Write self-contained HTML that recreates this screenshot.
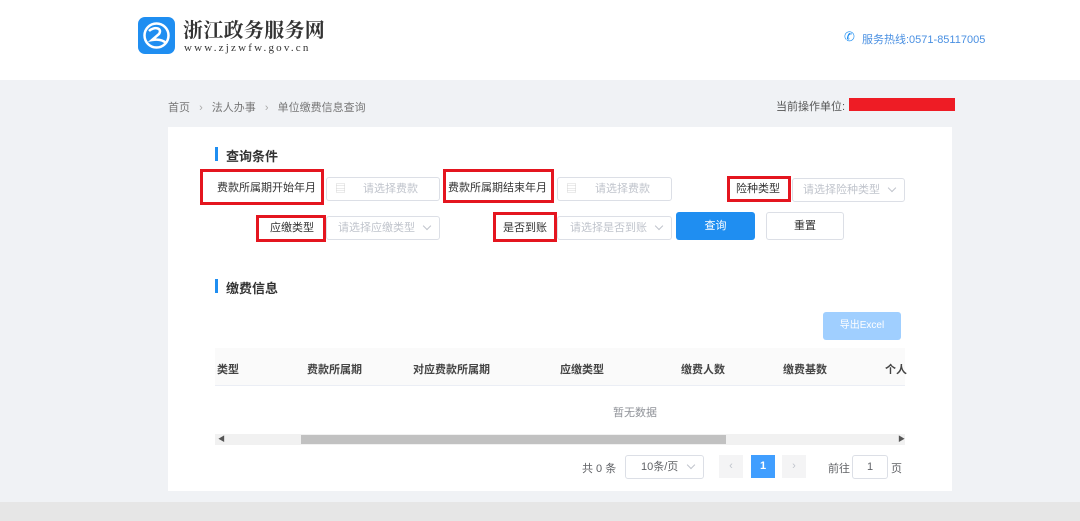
<!DOCTYPE html>
<html><head><meta charset="utf-8"><style>
*{margin:0;padding:0;box-sizing:border-box}
body{width:1080px;height:521px;position:relative;background:#f0f2f5;font-family:"Liberation Sans","Noto Sans CJK SC",sans-serif;font-size:11px;color:#606266;overflow:hidden}
.a{position:absolute}
.inp{position:absolute;border:1px solid #dcdfe6;border-radius:3px;background:#fff;color:#c0c4cc;font-size:11px;line-height:22px;height:24px}
.rb{position:absolute;border:3px solid #e4151f}
.lbl{position:absolute;font-size:11px;color:#333;line-height:18px}
.th{position:absolute;top:361px;font-size:11px;font-weight:bold;color:#444}
.chev{position:absolute;right:9px;top:6px;width:6px;height:6px;border-right:1px solid #c0c4cc;border-bottom:1px solid #c0c4cc;transform:rotate(45deg)}
</style></head><body>
<div class="a" style="left:0;top:0;width:1080px;height:80px;background:#fff"></div>
<div class="a" style="left:0;top:502px;width:1080px;height:19px;background:#e6e6e6"></div>
<div class="a" style="left:138px;top:17px;width:37px;height:37px;border-radius:7px;background:#1f8ef1"></div>
<svg class="a" style="left:138px;top:17px" width="37" height="37" viewBox="0 0 37 37"><circle cx="18.5" cy="18.5" r="12" fill="none" stroke="#fff" stroke-width="2.5"/><path d="M11 14 C16 9 25 11 21 17 L14 23 C20 22 25 23 28 26" fill="none" stroke="#fff" stroke-width="2.5"/></svg>
<div class="a" style="left:183px;top:16px;font-size:20px;font-weight:bold;color:#333;font-family:'Noto Serif CJK SC','Noto Sans CJK SC',serif;line-height:26px;letter-spacing:0.3px">浙江政务服务网</div>
<div class="a" style="left:184px;top:42px;font-size:11px;color:#333;font-family:'Liberation Serif',serif;letter-spacing:2.2px">www.zjzwfw.gov.cn</div>
<div class="a" style="left:844px;top:29px;font-size:13px;color:#1f8ef1">✆</div>
<div class="a" style="left:862px;top:31px;font-size:11px;color:#4a90e2">服务热线:0571-85117005</div>
<div class="a" style="left:168px;top:99px;color:#777">首页 <span style="margin:0 6px;color:#aaa">›</span> 法人办事 <span style="margin:0 6px;color:#aaa">›</span> 单位缴费信息查询</div>
<div class="a" style="left:776px;top:98px;color:#555">当前操作单位:</div>
<div class="a" style="left:849px;top:98px;width:106px;height:13px;background:#ee1c25"></div>
<div class="a" style="left:168px;top:127px;width:784px;height:364px;background:#fff"></div>
<div class="a" style="left:215px;top:147px;width:3px;height:14px;background:#1f8ef1"></div>
<div class="a" style="left:226px;top:146px;font-size:13px;font-weight:bold;color:#333">查询条件</div>
<div class="rb" style="left:200px;top:169px;width:124px;height:36px"></div>
<div class="lbl" style="left:217px;top:179px">费款所属期开始年月</div>
<div class="inp" style="left:326px;top:177px;width:114px"><span style="position:absolute;left:8px;color:#ccc">▤</span><span style="position:absolute;left:36px">请选择费款</span></div>
<div class="rb" style="left:443px;top:169px;width:111px;height:34px"></div>
<div class="lbl" style="left:448px;top:179px">费款所属期结束年月</div>
<div class="inp" style="left:557px;top:177px;width:115px"><span style="position:absolute;left:8px;color:#ccc">▤</span><span style="position:absolute;left:37px">请选择费款</span></div>
<div class="rb" style="left:727px;top:176px;width:64px;height:26px"></div>
<div class="lbl" style="left:736px;top:180px">险种类型</div>
<div class="inp" style="left:792px;top:178px;width:113px"><span style="position:absolute;left:10px">请选择险种类型</span><i class="chev"></i></div>
<div class="rb" style="left:256px;top:215px;width:70px;height:27px"></div>
<div class="lbl" style="left:270px;top:219px">应缴类型</div>
<div class="inp" style="left:326px;top:216px;width:114px"><span style="position:absolute;left:11px">请选择应缴类型</span><i class="chev"></i></div>
<div class="rb" style="left:493px;top:212px;width:64px;height:30px"></div>
<div class="lbl" style="left:503px;top:219px">是否到账</div>
<div class="inp" style="left:557px;top:216px;width:115px"><span style="position:absolute;left:12px">请选择是否到账</span><i class="chev"></i></div>
<div class="a" style="left:676px;top:212px;width:79px;height:28px;background:#1f8ef1;border-radius:3px;color:#fff;text-align:center;line-height:28px">查询</div>
<div class="a" style="left:766px;top:212px;width:78px;height:28px;border:1px solid #dcdfe6;border-radius:3px;color:#333;text-align:center;line-height:26px">重置</div>
<div class="a" style="left:215px;top:279px;width:3px;height:14px;background:#1f8ef1"></div>
<div class="a" style="left:226px;top:278px;font-size:13px;font-weight:bold;color:#333">缴费信息</div>
<div class="a" style="left:823px;top:312px;width:78px;height:28px;background:#a0cfff;border-radius:3px;color:#fff;text-align:center;line-height:28px;font-size:10px">导出Excel</div>
<div class="a" style="left:215px;top:348px;width:690px;height:38px;background:#fafafa;border-bottom:1px solid #ebeef5"></div>
<div class="th" style="left:217px">类型</div>
<div class="th" style="left:307px">费款所属期</div>
<div class="th" style="left:413px">对应费款所属期</div>
<div class="th" style="left:560px">应缴类型</div>
<div class="th" style="left:681px">缴费人数</div>
<div class="th" style="left:783px">缴费基数</div>
<div class="th" style="left:885px">个人</div>
<div class="a" style="left:613px;top:404px;color:#909399">暂无数据</div>
<div class="a" style="left:215px;top:434px;width:690px;height:11px;background:#f1f1f1"></div>
<div class="a" style="left:301px;top:435px;width:425px;height:9px;background:#c1c1c1"></div>
<div class="a" style="left:218px;top:434px;font-size:7px;color:#555">◀</div>
<div class="a" style="left:898px;top:434px;font-size:7px;color:#555">▶</div>
<div class="a" style="left:582px;top:460px">共 0 条</div>
<div class="inp" style="left:625px;top:455px;width:79px;color:#606266;text-align:left;padding-left:15px">10条/页<i class="chev"></i></div>
<div class="a" style="left:719px;top:455px;width:24px;height:23px;background:#f4f4f5;color:#c0c4cc;text-align:center;line-height:23px">‹</div>
<div class="a" style="left:751px;top:455px;width:24px;height:23px;background:#409eff;color:#fff;font-weight:bold;text-align:center;line-height:23px">1</div>
<div class="a" style="left:782px;top:455px;width:24px;height:23px;background:#f4f4f5;color:#c0c4cc;text-align:center;line-height:23px">›</div>
<div class="a" style="left:828px;top:460px">前往</div>
<div class="inp" style="left:852px;top:455px;width:36px;color:#606266;text-align:center">1</div>
<div class="a" style="left:891px;top:460px">页</div>
</body></html>
